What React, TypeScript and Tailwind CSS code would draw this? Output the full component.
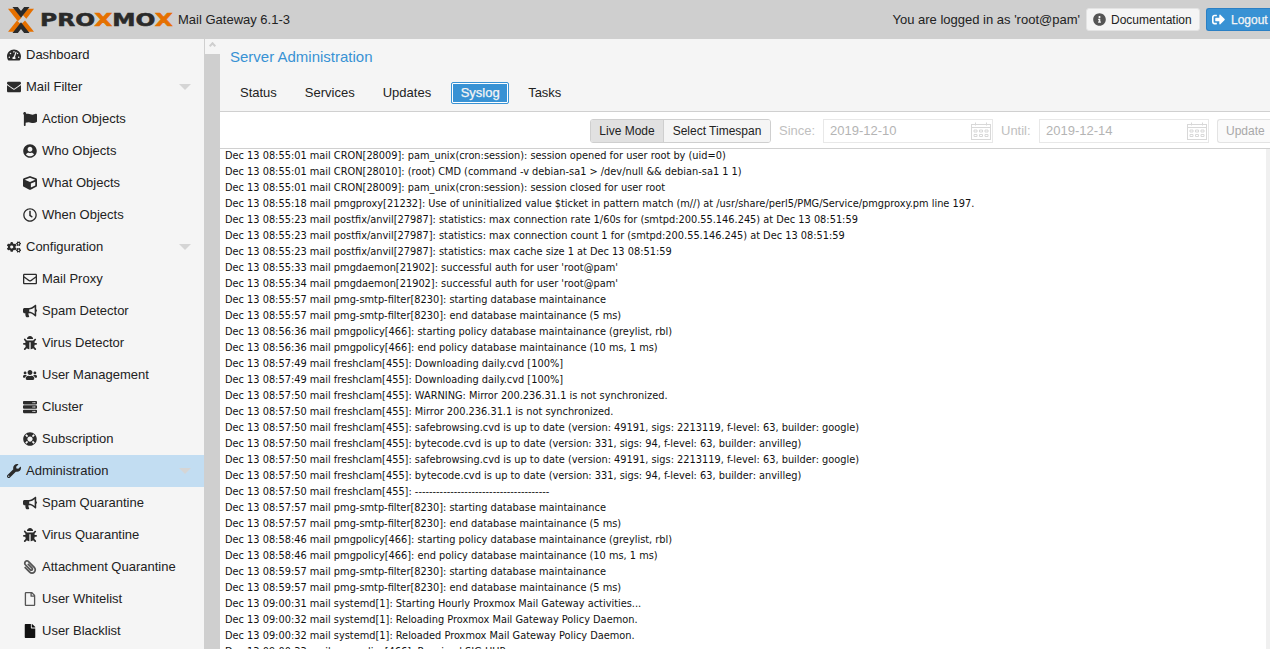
import type { IconType } from 'react-icons'
import {
  FaBug,
  FaBullhorn,
  FaCogs,
  FaCube,
  FaEnvelope,
  FaFile,
  FaFlag,
  FaInfoCircle,
  FaLifeRing,
  FaPaperclip,
  FaRegClock,
  FaRegEnvelope,
  FaRegFile,
  FaServer,
  FaSignOutAlt,
  FaTachometerAlt,
  FaUserCircle,
  FaUsers,
  FaWrench,
} from 'react-icons/fa'

interface NavItem {
  label: string
  icon: IconType
  sub?: boolean
  arrow?: boolean
  active?: boolean
  iconClass?: string
}

const nav: NavItem[] = [
  { label: 'Dashboard', icon: FaTachometerAlt },
  { label: 'Mail Filter', icon: FaEnvelope, arrow: true },
  { label: 'Action Objects', icon: FaFlag, sub: true },
  { label: 'Who Objects', icon: FaUserCircle, sub: true },
  { label: 'What Objects', icon: FaCube, sub: true },
  { label: 'When Objects', icon: FaRegClock, sub: true },
  { label: 'Configuration', icon: FaCogs, arrow: true },
  { label: 'Mail Proxy', icon: FaRegEnvelope, sub: true },
  { label: 'Spam Detector', icon: FaBullhorn, sub: true },
  { label: 'Virus Detector', icon: FaBug, sub: true },
  { label: 'User Management', icon: FaUsers, sub: true },
  { label: 'Cluster', icon: FaServer, sub: true },
  { label: 'Subscription', icon: FaLifeRing, sub: true },
  { label: 'Administration', icon: FaWrench, arrow: true, active: true },
  { label: 'Spam Quarantine', icon: FaBullhorn, sub: true },
  { label: 'Virus Quarantine', icon: FaBug, sub: true },
  { label: 'Attachment Quarantine', icon: FaPaperclip, sub: true, iconClass: '-scale-x-100 text-[#555]' },
  { label: 'User Whitelist', icon: FaRegFile, sub: true, iconClass: 'text-[#555]' },
  { label: 'User Blacklist', icon: FaFile, sub: true, iconClass: 'text-[#111]' },
]

const tabs = ['Status', 'Services', 'Updates', 'Syslog', 'Tasks']

const logLines = [
  'Dec 13 08:55:01 mail CRON[28009]: pam_unix(cron:session): session opened for user root by (uid=0)',
  'Dec 13 08:55:01 mail CRON[28010]: (root) CMD (command -v debian-sa1 > /dev/null && debian-sa1 1 1)',
  'Dec 13 08:55:01 mail CRON[28009]: pam_unix(cron:session): session closed for user root',
  'Dec 13 08:55:18 mail pmgproxy[21232]: Use of uninitialized value $ticket in pattern match (m//) at /usr/share/perl5/PMG/Service/pmgproxy.pm line 197.',
  'Dec 13 08:55:23 mail postfix/anvil[27987]: statistics: max connection rate 1/60s for (smtpd:200.55.146.245) at Dec 13 08:51:59',
  'Dec 13 08:55:23 mail postfix/anvil[27987]: statistics: max connection count 1 for (smtpd:200.55.146.245) at Dec 13 08:51:59',
  'Dec 13 08:55:23 mail postfix/anvil[27987]: statistics: max cache size 1 at Dec 13 08:51:59',
  "Dec 13 08:55:33 mail pmgdaemon[21902]: successful auth for user 'root@pam'",
  "Dec 13 08:55:34 mail pmgdaemon[21902]: successful auth for user 'root@pam'",
  'Dec 13 08:55:57 mail pmg-smtp-filter[8230]: starting database maintainance',
  'Dec 13 08:55:57 mail pmg-smtp-filter[8230]: end database maintainance (5 ms)',
  'Dec 13 08:56:36 mail pmgpolicy[466]: starting policy database maintainance (greylist, rbl)',
  'Dec 13 08:56:36 mail pmgpolicy[466]: end policy database maintainance (10 ms, 1 ms)',
  'Dec 13 08:57:49 mail freshclam[455]: Downloading daily.cvd [100%]',
  'Dec 13 08:57:49 mail freshclam[455]: Downloading daily.cvd [100%]',
  'Dec 13 08:57:50 mail freshclam[455]: WARNING: Mirror 200.236.31.1 is not synchronized.',
  'Dec 13 08:57:50 mail freshclam[455]: Mirror 200.236.31.1 is not synchronized.',
  'Dec 13 08:57:50 mail freshclam[455]: safebrowsing.cvd is up to date (version: 49191, sigs: 2213119, f-level: 63, builder: google)',
  'Dec 13 08:57:50 mail freshclam[455]: bytecode.cvd is up to date (version: 331, sigs: 94, f-level: 63, builder: anvilleg)',
  'Dec 13 08:57:50 mail freshclam[455]: safebrowsing.cvd is up to date (version: 49191, sigs: 2213119, f-level: 63, builder: google)',
  'Dec 13 08:57:50 mail freshclam[455]: bytecode.cvd is up to date (version: 331, sigs: 94, f-level: 63, builder: anvilleg)',
  'Dec 13 08:57:50 mail freshclam[455]: --------------------------------------',
  'Dec 13 08:57:57 mail pmg-smtp-filter[8230]: starting database maintainance',
  'Dec 13 08:57:57 mail pmg-smtp-filter[8230]: end database maintainance (5 ms)',
  'Dec 13 08:58:46 mail pmgpolicy[466]: starting policy database maintainance (greylist, rbl)',
  'Dec 13 08:58:46 mail pmgpolicy[466]: end policy database maintainance (10 ms, 1 ms)',
  'Dec 13 08:59:57 mail pmg-smtp-filter[8230]: starting database maintainance',
  'Dec 13 08:59:57 mail pmg-smtp-filter[8230]: end database maintainance (5 ms)',
  'Dec 13 09:00:31 mail systemd[1]: Starting Hourly Proxmox Mail Gateway activities...',
  'Dec 13 09:00:32 mail systemd[1]: Reloading Proxmox Mail Gateway Policy Daemon.',
  'Dec 13 09:00:32 mail systemd[1]: Reloaded Proxmox Mail Gateway Policy Daemon.',
  'Dec 13 09:00:33 mail pmgpolicy[466]: Received SIG HUP',
]

function CalendarIcon() {
  return (
    <svg width="20" height="18" viewBox="0 0 20 18" fill="none" stroke="#d8d8d8" strokeWidth="1">
      <rect x="0.5" y="2.5" width="19" height="15" />
      <path d="M0.5 5.5H19.5M4.5 0.5V3.5M15.5 0.5V3.5" />
      <path d="M3 8h3v2H3zM8.5 8h3v2h-3zM14 8h3v2h-3zM3 12.5h3v2H3zM8.5 12.5h3v2h-3zM14 12.5h3v2h-3z" />
    </svg>
  )
}

function LogoX() {
  return (
    <svg width="28" height="26" viewBox="0 0 29 29" className="shrink-0">
      <path d="M0 2h7l8 10-4 4z" fill="#e57000" />
      <path d="M0 27.500 10 15l4 4-7 8.500z" fill="#e57000" />
      <path d="M29 2h-7l-5.500 7 4 4z" fill="#e57000" />
      <path d="M29 27.500 19 15l-4 4 7 8.500z" fill="#e57000" />
      <path d="M5 0h6l3.500 4.500 3.500-4.500h6L14.500 12z" fill="#2a2a2a" />
      <path d="M5 29h6l3.500-4.500 3.500 4.500h6L14.500 17z" fill="#2a2a2a" />
    </svg>
  )
}

function DateField({ label, value, labelClass, inputClass }: { label: string; value: string; labelClass: string; inputClass: string }) {
  return (
    <>
      <span className={`text-[13px] text-[#c0c0c0] shrink-0 ${labelClass}`}>{label}</span>
      <div className={`h-[24px] w-[170px] shrink-0 border border-[#e8e8e8] flex items-center justify-between pl-[6px] pr-[1px] ${inputClass}`}>
        <span className="text-[13px] text-[#b4b4b4]">{value}</span>
        <CalendarIcon />
      </div>
    </>
  )
}

export default function App() {
  return (
    <div className="h-[649px] w-[1270px] overflow-hidden flex flex-col bg-white font-['Liberation_Sans',Arial,sans-serif] text-[#1a1a1a]">
      {/* top bar */}
      <div className="h-[39px] shrink-0 bg-[#cfcfcf] flex items-center pl-[7px]">
        <LogoX />
        <div className="ml-[5px] w-[134px] shrink-0 h-[39px] flex items-center">
          <span className="origin-left scale-x-[1.3] text-[18px] leading-none whitespace-pre font-['DejaVu_Sans',sans-serif] font-bold text-[#2a2a2a] [-webkit-text-stroke:0.5px_#2a2a2a]">
            PRO<span className="text-[#e57000] [-webkit-text-stroke:0.5px_#e57000]">X</span>MO<span className="text-[#e57000] [-webkit-text-stroke:0.5px_#e57000]">X</span>
          </span>
        </div>
        <span className="ml-[4px] text-[13px] text-[#222]">Mail Gateway 6.1-3</span>
        <span className="ml-auto text-[13px] text-[#222]">You are logged in as 'root@pam'</span>
        <button className="ml-[6px] h-[23px] w-[114px] rounded-[3px] border border-[#e3e3e3] bg-[#f5f5f5] flex items-center pl-[5px] text-[12px] text-[#222]">
          <FaInfoCircle className="text-[13px] text-[#555] ml-[1px] mr-[5px]" />
          Documentation
        </button>
        <button className="ml-[6px] h-[23px] w-[64px] shrink-0 rounded-l-[3px] border border-[#2a7fc4] border-r-0 bg-[#3892d4] flex items-center pl-[5px] text-[12px] text-[#f5f5f5] [-webkit-text-stroke:0.25px_#f5f5f5]">
          <FaSignOutAlt className="text-[13px] text-white mr-[6px]" />
          Logout
        </button>
      </div>

      <div className="flex-1 flex min-h-0">
        {/* left navigation */}
        <div className="w-[204px] shrink-0 bg-[#f5f5f5] overflow-hidden">
          {nav.map(item => {
            const Icon = item.icon
            return (
              <div
                key={item.label}
                className={`h-[32px] flex items-center text-[13px] text-[#222] ${item.sub ? 'pl-[23px]' : 'pl-[7px]'} ${item.active ? 'bg-[#c2ddf2]' : ''}`}
              >
                <span className="w-[19px] shrink-0 flex">
                  <Icon className={`text-[14px] ${item.iconClass ?? 'text-[#2b2b2b]'}`} />
                </span>
                <span>{item.label}</span>
                {item.arrow && (
                  <span className="ml-auto mr-[13px] w-0 h-0 border-x-[6px] border-x-transparent border-t-[6px] border-t-[#d5d5d5]" />
                )}
              </div>
            )
          })}
        </div>

        {/* splitter with nav scroll arrow */}
        <div className="w-[16px] shrink-0 bg-[#cfcfcf] flex flex-col">
          <div className="ml-[1px] h-[15px] bg-[#f5f5f5] flex justify-center pt-[4px]">
            <span className="w-[5px] h-[5px] border-l-2 border-t-2 border-[#cfcfcf] rotate-45" />
          </div>
        </div>

        {/* content */}
        <div className="flex-1 min-w-0 flex flex-col">
          <div className="h-[73px] shrink-0 bg-[#f5f5f5] border-b border-[#d0d0d0] flex flex-col">
            <div className="h-[36px] pl-[10px] pt-[9px] text-[15px] leading-[18px] text-[#3892d4]">Server Administration</div>
            <div className="flex items-center pl-[10px] mt-[6px] gap-[8px] text-[13px]">
              {tabs.map(t =>
                t === 'Syslog' ? (
                  <span
                    key={t}
                    className="h-[20px] w-[56px] ml-[3px] mr-[2px] flex items-center justify-center rounded-[1px] bg-[#3892d4] outline outline-1 outline-offset-0 outline-[#3892d4] border border-white text-[#f5f5f5] [-webkit-text-stroke:0.25px_#f5f5f5]"
                  >
                    {t}
                  </span>
                ) : (
                  <span key={t} className="h-[23px] px-[10px] flex items-center text-[#222]">
                    {t}
                  </span>
                ),
              )}
            </div>
          </div>

          {/* toolbar */}
          <div className="h-[37px] shrink-0 border-b border-[#d0d0d0] flex items-center justify-end pt-[1px]">
            <div className="flex h-[24px] text-[12px] text-[#222] rounded-[3px] border border-[#cfcfcf] mr-[8px] overflow-hidden">
              <span className="w-[73px] bg-[#e1e1e1] flex items-center justify-center border-r border-[#cfcfcf]">Live Mode</span>
              <span className="w-[106px] bg-[#f5f5f5] flex items-center justify-center">Select Timespan</span>
            </div>
            <DateField label="Since:" value="2019-12-10" labelClass="w-[44px]" inputClass="mr-[8px]" />
            <DateField label="Until:" value="2019-12-14" labelClass="w-[38px]" inputClass="mr-[8px]" />
            <button className="h-[24px] w-[53px] shrink-0 rounded-l-[3px] border border-r-0 border-[#e3e3e3] bg-[#fafafa] text-[12px] text-[#a8a8a8] text-left pl-[8px]">Update</button>
          </div>

          {/* log */}
          <div className="flex-1 min-h-0 overflow-hidden pl-[5px] flex">
            <div className="flex-1 min-w-0">
              {logLines.map((line, i) => (
                <div key={i} className="h-[16px] leading-[14px] text-[10.9px] whitespace-pre text-[#111] font-['DejaVu_Sans',sans-serif] [font-stretch:condensed]">
                  {line}
                </div>
              ))}
            </div>
            <div className="w-[4px] bg-[#f0f0f0] shrink-0" />
          </div>
        </div>
      </div>
    </div>
  )
}
